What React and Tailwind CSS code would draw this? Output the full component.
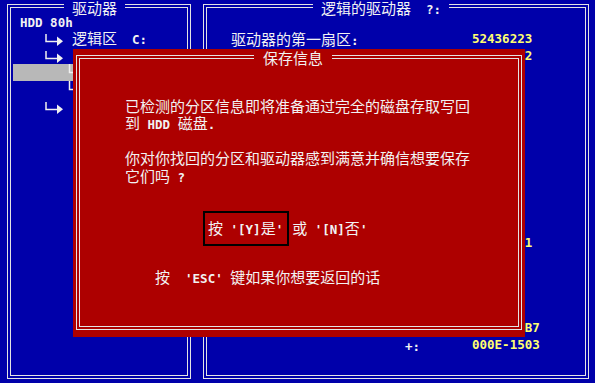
import React from "react";

// DOS-style text: half-width latin (7.5px) mixed with full-width CJK (15px)
const T = ({ s, className = "" }) => {
  const parts = s.match(/[\x00-\x7f]+|[^\x00-\x7f]+/g) || [];
  return (
    <span className={"whitespace-pre " + className}>
      {parts.map((p, i) =>
        /[\x00-\x7f]/.test(p[0]) ? (
          <span key={i} className="font-['DejaVu_Sans_Mono',monospace] text-[12.5px] font-bold">
            {p}
          </span>
        ) : (
          <span key={i} className="font-['Noto_Sans_CJK_SC',sans-serif] text-[15px]">
            {p}
          </span>
        )
      )}
    </span>
  );
};

const Line = ({ s, className = "" }) => (
  <div className={"h-[17.5px] flex items-center leading-none " + className}>
    <T s={s} />
  </div>
);

const Arrow = () => (
  <svg width="20" height="17" viewBox="0 0 20 17" className="shrink-0">
    <path d="M1 4 V11.5 H12" fill="none" stroke="#f0f0f0" strokeWidth="1.5" />
    <polygon points="12,6.5 12,16 18,11.25" fill="#f0f0f0" />
  </svg>
);

const Corner = () => (
  <svg width="14" height="17" viewBox="0 0 14 17" className="shrink-0">
    <path d="M1.5 0 V8.5 H14" fill="none" stroke="#f0f0f0" strokeWidth="1.5" />
  </svg>
);

const rightRows = [
  { label: "驱动器的第一扇区:", value: "52436223" },
  { label: "分区的扇区数:", value: "16771862" },
  {}, {}, {}, {}, {}, {}, {}, {}, {}, {},
  { label: "分区类型:", value: "00000001" },
  {}, {}, {}, {},
  { label: "开始位置:", value: "0000-00B7" },
  { label: "+:", value: "000E-1503", pad: true },
];

export default function App() {
  return (
    <div className="relative w-[595px] h-[383px] overflow-hidden bg-[#0000aa] text-[#f2f2f2]">
      <div className="flex gap-[12px] pl-[7px] pt-[4px]">
        {/* left panel */}
        <div className="relative w-[184px] h-[375px] border-[4px] border-double border-[#e4e4e4]">
          <div className="absolute top-[-8px] left-[53px] bg-[#0000aa] px-[8px] leading-[15px]">
            <T s="驱动器" />
          </div>
          <div className="flex flex-col pt-[5px] leading-none">
            <div className="h-[17px] pl-[9px] flex items-center">
              <T s="HDD 80h" />
            </div>
            <div className="h-[17px] pl-[34px] flex items-center">
              <Arrow />
              <T s="逻辑区  C:" className="ml-[7px]" />
            </div>
            <div className="h-[17px] pl-[34px] flex items-center">
              <Arrow />
            </div>
            <div className="h-[17px] ml-[2px] pl-[55px] flex items-center bg-[#b8b8b8]">
              <Corner />
            </div>
            <div className="h-[17px] pl-[57px] flex items-center">
              <Corner />
            </div>
            <div className="h-[17px] pl-[34px] flex items-center">
              <Arrow />
            </div>
          </div>
        </div>

        {/* right panel */}
        <div className="relative w-[386px] h-[375px] border-[4px] border-double border-[#e4e4e4]">
          <div className="absolute top-[-8px] left-[106px] bg-[#0000aa] px-[8px] leading-[15px]">
            <T s="逻辑的驱动器  ?:" />
          </div>
          <div className="flex flex-col pt-[23px] pl-[24px]">
            {rightRows.map((r, i) => (
              <div key={i} className="h-[17px] flex items-center leading-none">
                <div className={"w-[241px] " + (r.pad ? "pl-[174px]" : "")}>
                  {r.label && <T s={r.label} />}
                </div>
                {r.value && (
                  <span className="font-['DejaVu_Sans_Mono',monospace] text-[12.5px] font-bold text-[#ffff70]">
                    {r.value}
                  </span>
                )}
              </div>
            ))}
          </div>
        </div>
      </div>

      {/* save dialog */}
      <div className="absolute left-[73px] top-[49px] w-[452px] h-[288px] bg-[#ad0000] pt-[6px] pl-[3px] pr-[3px] pb-[7px]">
        <div className="relative h-full border-[4px] border-double border-[#e4e4e4]">
          <div className="absolute top-[-9px] left-[174px] bg-[#ad0000] px-[9px] leading-[15px]">
            <T s="保存信息" />
          </div>
          <div className="flex flex-col pt-[38px] pl-[45px]">
            <Line s="已检测的分区信息即将准备通过完全的磁盘存取写回" />
            <Line s="到 HDD 磁盘." />
            <div className="h-[17.5px]" />
            <Line s="你对你找回的分区和驱动器感到满意并确信想要保存" />
            <Line s="它们吗 ?" />
            <div className="flex items-center mt-[26px] ml-[78px] leading-none">
              <div className="h-[35px] flex items-center border-2 border-black pl-[3px] pr-[4px]">
                <T s="按 '[Y]是'" />
              </div>
              <T s="或 '[N]否'" className="ml-[3px]" />
            </div>
            <Line s="按  'ESC' 键如果你想要返回的话" className="mt-[23px] ml-[30px]" />
          </div>
        </div>
      </div>
    </div>
  );
}
